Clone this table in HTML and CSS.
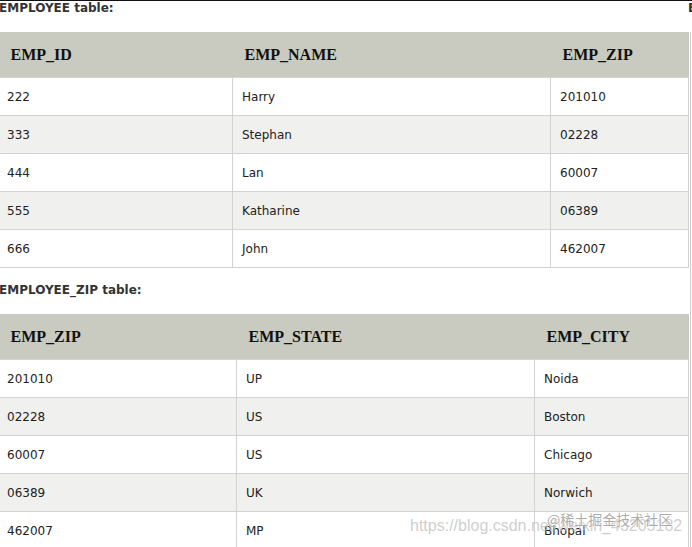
FILE: index.html
```html
<!DOCTYPE html>
<html>
<head>
<meta charset="utf-8">
<link rel="stylesheet" href="styles.css">
</head>
<body>
<div class="page">
  <div class="col main">
    <section class="block first">
      <h3 class="title">EMPLOYEE table:</h3>
      <table class="grid t1">
        <colgroup><col class="c1"><col class="c2"><col class="c3"></colgroup>
        <thead><tr><th>EMP_ID</th><th>EMP_NAME</th><th>EMP_ZIP</th></tr></thead>
        <tbody>
          <tr><td>222</td><td>Harry</td><td>201010</td></tr>
          <tr class="alt"><td>333</td><td>Stephan</td><td>02228</td></tr>
          <tr><td>444</td><td>Lan</td><td>60007</td></tr>
          <tr class="alt"><td>555</td><td>Katharine</td><td>06389</td></tr>
          <tr><td>666</td><td>John</td><td>462007</td></tr>
        </tbody>
      </table>
    </section>
    <section class="block second">
      <h3 class="title">EMPLOYEE_ZIP table:</h3>
      <table class="grid t2">
        <colgroup><col class="c1"><col class="c2"><col class="c3"></colgroup>
        <thead><tr><th>EMP_ZIP</th><th>EMP_STATE</th><th>EMP_CITY</th></tr></thead>
        <tbody>
          <tr><td>201010</td><td>UP</td><td>Noida</td></tr>
          <tr class="alt"><td>02228</td><td>US</td><td>Boston</td></tr>
          <tr><td>60007</td><td>US</td><td>Chicago</td></tr>
          <tr class="alt"><td>06389</td><td>UK</td><td>Norwich</td></tr>
          <tr><td>462007</td><td>MP</td><td>Bhopal</td></tr>
        </tbody>
      </table>
    </section>
  </div>
  <div class="col next">
    <section class="block first">
      <h3 class="title">EMPLOYEE table:</h3>
      <div class="stub"></div>
    </section>
    <section class="block second">
      <h3 class="title">EMPLOYEE table:</h3>
      <div class="stub"></div>
    </section>
  </div>
</div>
<div class="watermark">
  <span class="wm-url">https://blog.csdn.net/weixin_43205182</span>
  <span class="wm-juejin">@稀土掘金技术社区</span>
</div>
</body>
</html>
```
FILE: styles.css
```css
html, body {
  margin: 0;
  padding: 0;
  background: #fff;
  overflow: hidden;
  width: 692px;
  height: 547px;
}
body {
  position: relative;
  font-family: "DejaVu Sans", Verdana, sans-serif;
}
.page {
  display: flex;
  gap: 1px;
  margin-left: -3px;
  border-top: 1px solid #111;
  width: 1100px;
}
.col.main { width: 691px; flex: none; }
.col.next { width: 300px; flex: none; }

.block.second { margin-top: 15px; }

.title {
  margin: 0 0 17px 2px;
  font-size: 12px;
  line-height: 14px;
  font-weight: bold;
  color: #333;
  white-space: nowrap;
}
.col.next .title { margin-left: -1px; }

.grid {
  border-collapse: collapse;
  table-layout: fixed;
  width: 691px;
}
.t1 .c1 { width: 235px; }
.t1 .c2 { width: 318px; }
.t1 .c3 { width: 138px; }
.t2 .c1 { width: 239px; }
.t2 .c2 { width: 298px; }
.t2 .c3 { width: 154px; }

.grid th {
  background: #c9cbc0;
  height: 45px;
  padding: 0 0 0 12px;
  text-align: left;
  font-family: "Liberation Serif", "Times New Roman", serif;
  font-size: 16px;
  font-weight: bold;
  color: #111;
  border: none;
}
.grid th:first-child { padding-left: 13px; }

.grid td {
  height: 37px;
  padding: 0 0 0 9px;
  font-size: 12px;
  color: #222;
  border: 1px solid #d2d2d2;
  vertical-align: middle;
}
.grid tr.alt td { background: #f0f0ee; }

.stub {
  border-left: 1px solid #cfcfcf;
  height: 600px;
  margin-left: 1px;
}

.watermark {
  position: absolute;
  left: 410px;
  top: 508px;
  width: 280px;
  height: 30px;
  pointer-events: none;
}
.wm-url {
  position: absolute;
  left: 0;
  top: 9px;
  font-family: "Liberation Sans", Arial, sans-serif;
  font-size: 16px;
  color: rgba(190, 190, 190, 0.75);
  white-space: nowrap;
}
.wm-juejin {
  position: absolute;
  left: 137px;
  top: 1px;
  font-family: "Noto Sans CJK SC", "Liberation Sans", sans-serif;
  font-size: 14px;
  line-height: 20px;
  color: rgba(150, 150, 150, 0.8);
  text-shadow: 0 0 2px #fff, 0 0 1px #fff;
  white-space: nowrap;
}
```
